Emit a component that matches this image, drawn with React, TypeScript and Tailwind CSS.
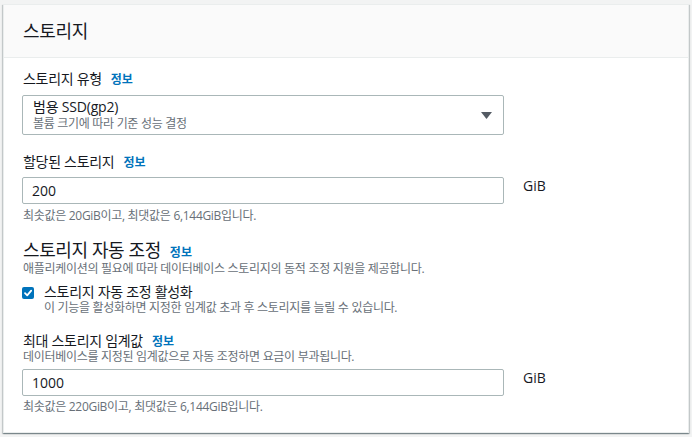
import React from "react";

const font = { fontFamily: '"Open Sans", "Noto Sans CJK KR", sans-serif' };

function Info() {
  return (
    <span className="ml-[9px] text-[12px] leading-[1] font-bold text-[#0073bb] tracking-normal">정보</span>
  );
}

export default function App() {
  return (
    <div
      className="w-[692px] h-[437px] bg-[#f2f3f3] pl-[3px] pr-[3px] pt-[4px] overflow-hidden"
      style={font}
    >
      <div className="w-[686px] bg-white border border-[#eaeded] shadow-[0_1px_1px_0_rgba(0,28,36,0.3),1px_1px_1px_0_rgba(0,28,36,0.15),-1px_1px_1px_0_rgba(0,28,36,0.15)]">
        <div className="h-[53px] bg-[#fafafa] border-b border-[#eaeded] pl-[19px] flex items-center">
          <h2 className="text-[18px] leading-[22px] text-[#16191f] font-normal tracking-[-0.3px]">스토리지</h2>
        </div>
        <div className="pl-[18px] pt-[11px] pb-[17px] text-[#16191f]">
          <div className="h-[20px] text-[14px] leading-[20px] pl-[1px] tracking-[-0.3px]">
            스토리지 유형<Info />
          </div>
          <div className="mt-[6px] w-[482px] h-[40px] border border-[#aab7b8] rounded-[2px] flex items-center pl-[10px] pr-[10px]">
            <div className="flex-1">
              <div className="h-[18px] text-[14px] leading-[18px] tracking-[-0.2px]">범용 SSD(gp2)</div>
              <div className="h-[16px] text-[12px] leading-[16px] text-[#687078] tracking-[-0.3px]">볼륨 크기에 따라 기준 성능 결정</div>
            </div>
            <svg width="11" height="7" viewBox="0 0 11 7" className="mr-[1px]">
              <polygon points="0,0 11,0 5.5,7" fill="#545b64" />
            </svg>
          </div>

          <div className="mt-[17px] h-[20px] text-[14px] leading-[20px] pl-[1px] tracking-[-0.3px]">
            할당된 스토리지<Info />
          </div>
          <div className="mt-[5px] flex items-start">
            <div className="w-[482px] h-[27px] border border-[#aab7b8] rounded-[2px] flex items-center pl-[9px] text-[14px]">
              200
            </div>
            <div className="ml-[19px] h-[18px] text-[14px] leading-[18px]">GiB</div>
          </div>
          <div className="mt-[4px] h-[16px] pl-[1px] text-[12px] leading-[16px] text-[#687078] tracking-[-0.3px]">
            최솟값은 20GiB이고, 최댓값은 6,144GiB입니다.
          </div>

          <div className="mt-[15px] h-[22px] pl-[1px] text-[18px] leading-[22px] tracking-[-0.4px]">
            스토리지 자동 조정<Info />
          </div>
          <div className="h-[16px] pl-[1px] text-[12px] leading-[16px] text-[#687078] tracking-[-0.3px]">
            애플리케이션의 필요에 따라 데이터베이스 스토리지의 동적 조정 지원을 제공합니다.
          </div>

          <div className="mt-[6px] flex items-start">
            <div className="mt-[4px] w-[12px] h-[12px] rounded-[2px] bg-[#0073bb] flex items-center justify-center">
              <svg width="10" height="10" viewBox="0 0 10 10">
                <polyline points="2,5.2 4.2,7.4 8.2,2.6" fill="none" stroke="white" strokeWidth="1.8" strokeLinecap="round" strokeLinejoin="round" />
              </svg>
            </div>
            <div className="ml-[10px]">
              <div className="h-[18px] text-[14px] leading-[18px] tracking-[-0.3px]">스토리지 자동 조정 활성화</div>
              <div className="h-[14px] text-[12px] leading-[14px] text-[#687078] tracking-[-0.3px]">
                이 기능을 활성화하면 지정한 임계값 초과 후 스토리지를 늘릴 수 있습니다.
              </div>
            </div>
          </div>

          <div className="mt-[18px] h-[16px] pl-[1px] text-[14px] leading-[16px] tracking-[-0.3px]">
            최대 스토리지 임계값<Info />
          </div>
          <div className="h-[16px] pl-[1px] text-[12px] leading-[16px] text-[#687078] tracking-[-0.3px]">
            데이터베이스를 지정된 임계값으로 자동 조정하면 요금이 부과됩니다.
          </div>
          <div className="mt-[4px] flex items-start">
            <div className="w-[482px] h-[27px] border border-[#aab7b8] rounded-[2px] flex items-center pl-[9px] text-[14px]">
              1000
            </div>
            <div className="ml-[19px] h-[18px] text-[14px] leading-[18px]">GiB</div>
          </div>
          <div className="mt-[3px] h-[16px] pl-[1px] text-[12px] leading-[16px] text-[#687078] tracking-[-0.3px]">
            최솟값은 220GiB이고, 최댓값은 6,144GiB입니다.
          </div>
        </div>
      </div>
    </div>
  );
}
